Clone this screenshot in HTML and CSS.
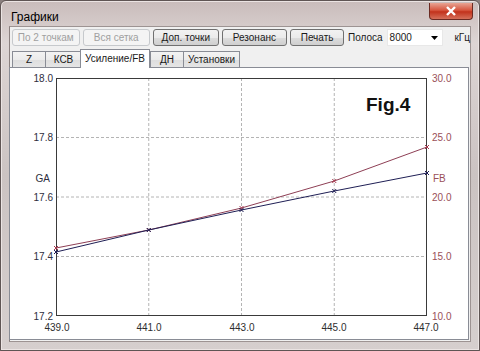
FILE: index.html
```html
<!DOCTYPE html>
<html lang="ru">
<head>
  <meta charset="UTF-8">
  <title>Графики</title>
  <link rel="stylesheet" href="styles.css">
</head>
<body>

  <div class="window">
    <!-- Title bar -->
    <div class="titlebar">
      <span class="title">Графики</span>
      <div class="close-btn">
        <svg width="12" height="10" viewBox="0 0 12 10"><path d="M2 1 L10 9 M10 1 L2 9" stroke="#fff" stroke-width="2.4"/></svg>
      </div>
    </div>

    <div class="client">
      <!-- Toolbar -->
      <div class="toolbar">
        <button class="btn" disabled style="width:69px">По 2 точкам</button>
        <button class="btn" disabled style="width:69px">Вся сетка</button>
        <button class="btn" style="width:67px">Доп. точки</button>
        <button class="btn" style="width:67px">Резонанс</button>
        <button class="btn" style="width:55px">Печать</button>
        <span class="label">Полоса</span>
        <div class="combo">
          <span>8000</span>
          <svg width="7" height="4" viewBox="0 0 7 4"><path d="M0 0 L7 0 L3.5 4 Z" fill="#000"/></svg>
        </div>
        <span class="unit">кГц</span>
      </div>

      <!-- Tabs -->
      <div class="tabs">
        <div class="tab" style="width:34px">Z</div>
        <div class="tab" style="width:37px">КСВ</div>
        <div class="tab active" style="width:70px">Усиление/FB</div>
        <div class="tab" style="width:34px">ДН</div>
        <div class="tab" style="width:57px">Установки</div>
      </div>

      <!-- Chart panel -->
      <div class="panel">
        <svg class="chart" width="460" height="271" viewBox="9 69 460 271">
          <!-- grid -->
          <g class="grid">
            <line x1="147.75" y1="79" x2="147.75" y2="317"/>
            <line x1="240.5" y1="79" x2="240.5" y2="317"/>
            <line x1="333.25" y1="79" x2="333.25" y2="317"/>
            <line x1="55" y1="138.5" x2="426" y2="138.5"/>
            <line x1="55" y1="198" x2="426" y2="198"/>
            <line x1="55" y1="257.5" x2="426" y2="257.5"/>
          </g>
          <rect x="55.5" y="79.5" width="370" height="237" fill="none" stroke="#3a3a3a"/>

          <!-- left axis -->
          <g class="axis-left">
            <text x="52" y="82.5">18.0</text>
            <text x="52" y="142">17.8</text>
            <text x="52" y="201.5">17.6</text>
            <text x="52" y="261">17.4</text>
            <text x="52" y="320.5">17.2</text>
            <text x="49" y="183">GA</text>
          </g>

          <!-- right axis -->
          <g class="axis-right">
            <text x="431" y="82.5">30.0</text>
            <text x="431" y="142">25.0</text>
            <text x="431" y="201.5">20.0</text>
            <text x="431" y="261">15.0</text>
            <text x="431" y="320.5">10.0</text>
            <text x="432" y="183">FB</text>
          </g>

          <!-- bottom axis -->
          <g class="axis-bottom">
            <text x="56" y="332">439.0</text>
            <text x="148" y="332">441.0</text>
            <text x="241" y="332">443.0</text>
            <text x="333" y="332">445.0</text>
            <text x="425" y="332">447.0</text>
          </g>

          <text class="fig" x="365" y="111.5">Fig.4</text>

          <!-- FB series -->
          <polyline class="line-fb" points="55,249 147.75,231 240.5,209 333.25,182 426,148"/>
          <g class="mark-fb">
            <path d="M53,247 l4,4 m0,-4 l-4,4"/>
            <path d="M145.75,229 l4,4 m0,-4 l-4,4"/>
            <path d="M238.5,207 l4,4 m0,-4 l-4,4"/>
            <path d="M331.25,180 l4,4 m0,-4 l-4,4"/>
            <path d="M424,146 l4,4 m0,-4 l-4,4"/>
          </g>

          <!-- GA series -->
          <polyline class="line-ga" points="55,253 147.75,231 240.5,211 333.25,192 426,174"/>
          <g class="mark-ga">
            <path d="M53,251 l4,4 m0,-4 l-4,4"/>
            <path d="M145.75,229 l4,4 m0,-4 l-4,4"/>
            <path d="M238.5,209 l4,4 m0,-4 l-4,4"/>
            <path d="M331.25,190 l4,4 m0,-4 l-4,4"/>
            <path d="M424,172 l4,4 m0,-4 l-4,4"/>
          </g>
        </svg>
      </div>
    </div>
  </div>

</body>
</html>
```

FILE: styles.css
```css
html, body {
  margin: 0;
  padding: 0;
}

body {
  width: 480px;
  height: 351px;
  overflow: hidden;
  font-family: "Liberation Sans", Arial, sans-serif;
  font-size: 10px;
  color: #1a1a1a;
  background: #8a7f7e;
}

.window {
  box-sizing: border-box;
  width: 480px;
  height: 351px;
  display: flex;
  flex-direction: column;
  padding: 0 8px 8px 8px;
  border: 1px solid #5f5554;
  border-radius: 6px 6px 0 0;
  background: linear-gradient(to bottom, #c9bcbb 0%, #ddd5d4 12%, #cbc3c2 50%, #d6cfce 100%);
  box-shadow: inset 0 0 0 1px #ebe4e3;
}

.titlebar {
  height: 25px;
  display: flex;
  align-items: flex-start;
}

.title {
  margin: 9px 0 0 2px;
  font-size: 12px;
  color: #000;
}

.close-btn {
  margin: 2px -2px 0 auto;
  width: 42px;
  height: 16px;
  display: flex;
  align-items: center;
  justify-content: center;
  border: 1px solid #6b2a22;
  border-top: none;
  border-radius: 0 0 4px 4px;
  background: linear-gradient(to bottom, #e8a493 0%, #d7563f 45%, #c2321c 55%, #d5705a 100%);
}

.client {
  flex: 1;
  display: flex;
  flex-direction: column;
  background: #f0f0f0;
  border: 1px solid #9d9392;
  border-left-color: #8a807f;
}

.toolbar {
  display: flex;
  align-items: center;
  gap: 3px;
  padding: 2px 0 0 2px;
  height: 17px;
}

.btn {
  box-sizing: border-box;
  height: 17px;
  padding: 0;
  font-family: "Liberation Sans", Arial, sans-serif;
  font-size: 10px;
  color: #1a1a1a;
  border: 1px solid #707070;
  border-radius: 3px;
  background: linear-gradient(to bottom, #f2f2f2 0%, #ebebeb 50%, #dddddd 51%, #cfcfcf 100%);
}

.btn:disabled {
  color: #a0a0a0;
  border-color: #c6c9cc;
  background: #f4f4f4;
}

.label {
  margin-left: 1px;
}

.combo {
  box-sizing: border-box;
  width: 58px;
  height: 17px;
  margin-left: 1px;
  display: flex;
  align-items: center;
  justify-content: space-between;
  padding: 0 4px 0 2px;
  background: #fff;
  border: 1px solid #e8e8e8;
}

.unit {
  margin-left: 8px;
}

.tabs {
  display: flex;
  align-items: flex-end;
  height: 19px;
  margin-top: 3px;
  padding-left: 2px;
}

.tab {
  box-sizing: border-box;
  height: 17px;
  line-height: 15px;
  text-align: center;
  border: 1px solid #898c95;
  border-bottom: none;
  margin-right: -1px;
  background: linear-gradient(to bottom, #f3f3f3 0%, #ebebeb 50%, #dedede 51%, #e6e6e6 100%);
}

.tab.active {
  height: 19px;
  line-height: 17px;
  position: relative;
  z-index: 2;
  margin-left: -1px;
  margin-right: 0;
  background: #fff;
}

.panel {
  flex: 1;
  margin: -1px 1px 1px -1px;
  background: #fff;
  border: 1px solid #898c95;
}

.chart {
  display: block;
}

.chart text {
  font-family: "Liberation Sans", Arial, sans-serif;
  font-size: 10px;
}

.grid line {
  stroke: #b4b4b4;
  stroke-width: 1;
  stroke-dasharray: 3 2;
}

.axis-left text {
  text-anchor: end;
  fill: #2e2e3e;
}

.axis-right text {
  fill: #9a5058;
}

.axis-bottom text {
  text-anchor: middle;
  fill: #2e2e2e;
}

.chart .fig {
  font-size: 19px;
  font-weight: bold;
  fill: #111;
}

.line-ga {
  fill: none;
  stroke: #1f1f55;
  stroke-width: 1;
}

.line-fb {
  fill: none;
  stroke: #8e3f55;
  stroke-width: 1;
}

.mark-ga path {
  stroke: #1f1f55;
  fill: none;
}

.mark-fb path {
  stroke: #a8384e;
  fill: none;
}
```
